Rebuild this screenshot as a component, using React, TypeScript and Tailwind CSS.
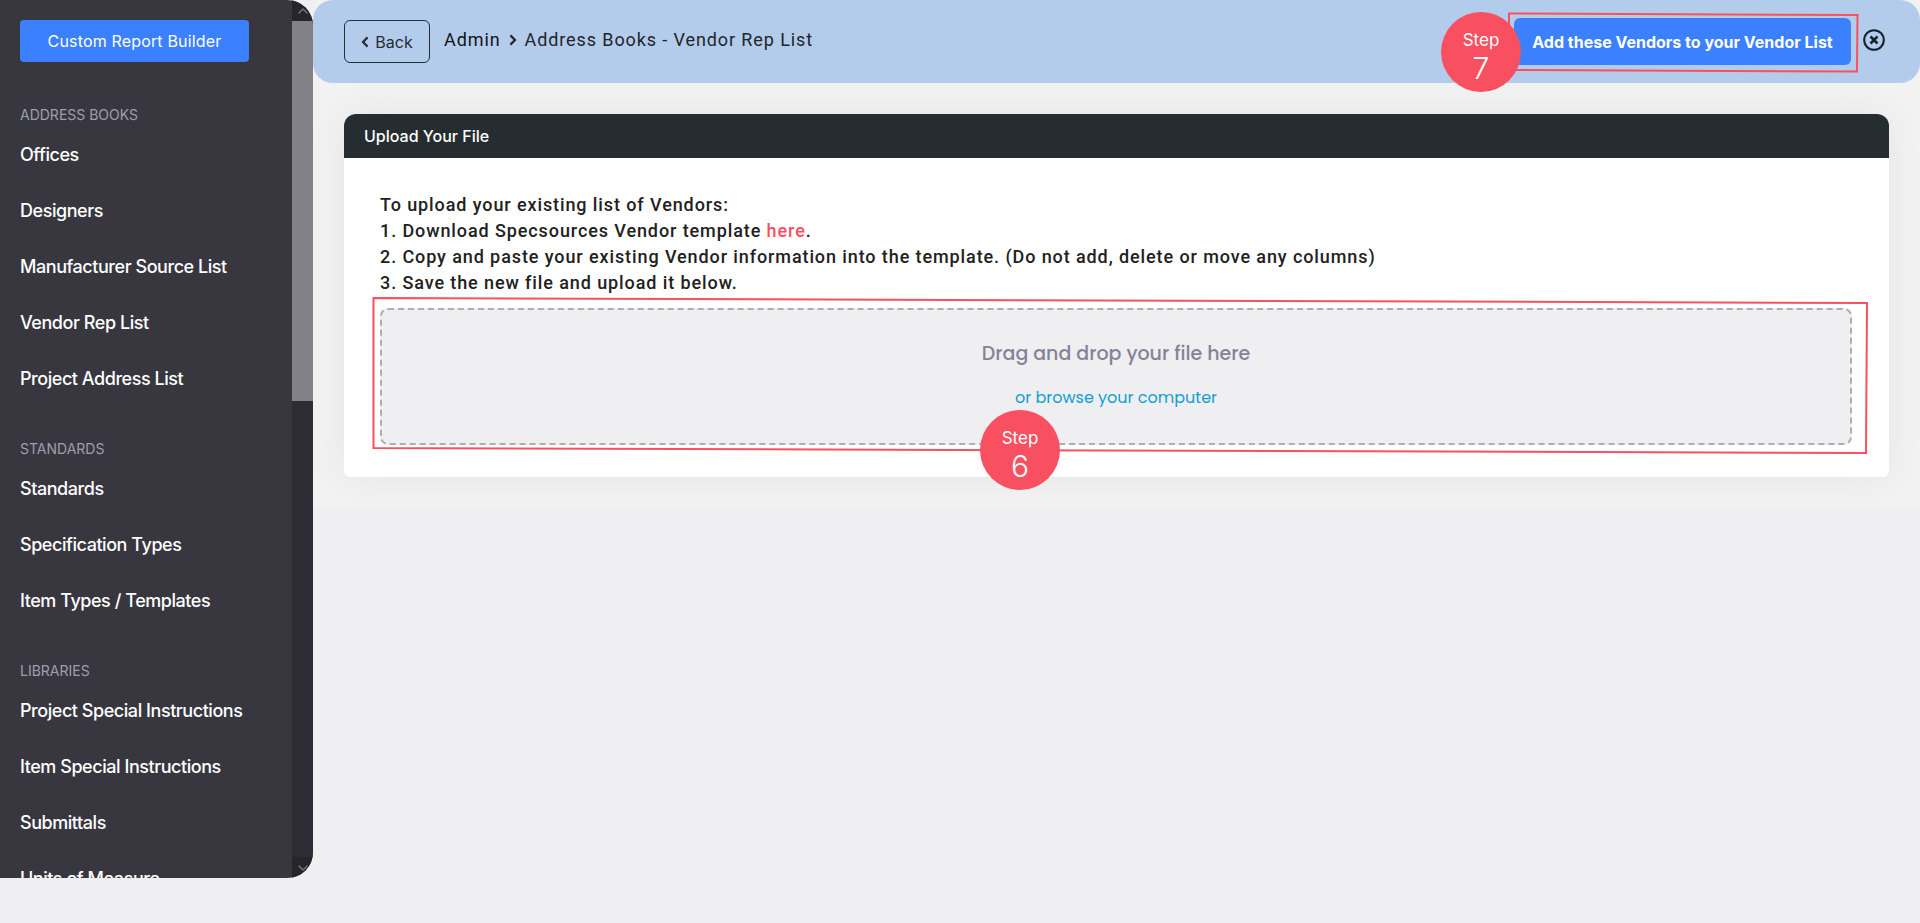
import React from "react";
import { ChevronDown, ChevronUp } from "lucide-react";

const groups = [
  {
    title: "ADDRESS BOOKS",
    items: ["Offices", "Designers", "Manufacturer Source List", "Vendor Rep List", "Project Address List"],
  },
  { title: "STANDARDS", items: ["Standards", "Specification Types", "Item Types / Templates"] },
  {
    title: "LIBRARIES",
    items: ["Project Special Instructions", "Item Special Instructions", "Submittals", "Units of Measure"],
  },
];

function SmallChevron({ direction }: { direction: "left" | "right" }) {
  return (
    <svg aria-hidden="true" viewBox="0 0 8 12" className="h-3 w-2 shrink-0" fill="none" stroke="currentColor" strokeWidth="2.2">
      <path d={direction === "left" ? "M6.6 1.4 2 6l4.600 4.600" : "M1.400 1.400 6 6l-4.600 4.600"} />
    </svg>
  );
}

function CloseIcon() {
  return (
    <svg aria-hidden="true" viewBox="0 0 24 24" className="h-6 w-6" fill="none" stroke="currentColor">
      <circle cx="12" cy="12" r="9.800" strokeWidth="2" />
      <path d="m8.500 8.500 7 7m0-7-7 7" strokeWidth="2.500" />
    </svg>
  );
}

function StepBadge({ step, className }: { step: number; className: string }) {
  return (
    <div
      className={`absolute flex h-20 w-20 flex-col items-center rounded-full bg-[#f85060] pt-4 text-white ${className}`}
    >
      <span className="text-[17px] leading-6">Step</span>
      <span className="text-[30px] leading-8 font-light">{step}</span>
    </div>
  );
}

function Sidebar() {
  return (
    <aside className="flex h-[calc(100vh-45px)] w-[313px] shrink-0 overflow-hidden rounded-r-[26px] bg-[#383740]">
      <div className="min-w-0 flex-1 overflow-hidden px-5 pt-5">
        <button className="h-[42px] w-[229px] rounded bg-[#3b80ff] text-base tracking-[0.01em] text-white">
          Custom Report Builder
        </button>
        <nav className="mt-[41px] flex flex-col gap-[30px]">
          {groups.map((group) => (
            <section key={group.title}>
              <h2 className="h-6 text-sm leading-6 text-[#9f9eab]">{group.title}</h2>
              <ul>
                {group.items.map((item) => (
                  <li key={item} className="flex h-14 items-center">
                    <a href="#" className="text-lg leading-6 font-medium tracking-tight whitespace-nowrap text-white">
                      {item}
                    </a>
                  </li>
                ))}
              </ul>
            </section>
          ))}
        </nav>
      </div>
      <div aria-hidden="true" className="flex w-[21px] flex-col items-center bg-[#2d2c35] text-[#77767b]">
        <div className="flex h-[21px] w-full items-center justify-center bg-[#262529]">
          <ChevronUp size={16} />
        </div>
        <div className="h-[380px] w-full bg-[#828186]" />
        <div className="flex-1" />
        <div className="flex h-[21px] w-full items-center justify-center bg-[#262529]">
          <ChevronDown size={16} />
        </div>
      </div>
    </aside>
  );
}

function TopBar() {
  return (
    <header className="relative flex h-[83px] items-start rounded-[20px] bg-[#b4ccec] pr-[34px] pl-[31px]">
      <button className="mt-5 flex h-[43px] w-[86px] items-center justify-center gap-1.5 rounded-md border border-[#252d30] text-base text-[#252d30]">
        <SmallChevron direction="left" />
        Back
      </button>
      <nav className="mt-7 ml-[14px] flex items-center gap-2 font-[Roboto,sans-serif] text-lg leading-6 tracking-wider text-[#202528]">
        <a href="#" className="text-[#101416]">
          Admin
        </a>
        <SmallChevron direction="right" />
        <span>Address Books - Vendor Rep List</span>
      </nav>
      <div className="relative mt-[18px] ml-auto">
        <button className="h-[47px] w-[337px] rounded-md bg-[#3b80ff] text-base font-bold whitespace-nowrap text-white">
          Add these Vendors to your Vendor List
        </button>
        <svg
          aria-hidden="true"
          viewBox="0 0 353 63"
          preserveAspectRatio="none"
          className="pointer-events-none absolute -top-2 -left-2 h-[63px] w-[353px]"
        >
          <path d="M3 3.500 351.500 5 351 61.500 3 60Z" fill="none" stroke="#f85060" strokeWidth="2" />
        </svg>
        <StepBadge step={7} className="-top-[6px] -left-[73px]" />
      </div>
      <button aria-label="Close" className="mt-7 ml-[11px] text-[#15202a]">
        <CloseIcon />
      </button>
    </header>
  );
}

function UploadCard() {
  return (
    <section className="rounded-t-xl rounded-b-md bg-white shadow-[0_0_40px_rgba(0,0,0,0.06)]">
      <h1 className="flex h-11 items-center rounded-t-xl bg-[#252d30] px-5 text-base font-medium text-white">
        Upload Your File
      </h1>
      <div className="pt-[34px] pr-[37px] pb-8 pl-9">
        <div className="font-[Roboto,sans-serif] text-lg leading-[26px] font-medium tracking-wider text-[#212121]">
          <p>To upload your existing list of Vendors:</p>
          <p>
            1. Download Specsources Vendor template{" "}
            <a href="#" className="text-[#f85060]">
              here
            </a>
            .
          </p>
          <p>2. Copy and paste your existing Vendor information into the template. (Do not add, delete or move any columns)</p>
          <p>3. Save the new file and upload it below.</p>
        </div>
        <div className="relative mt-3">
          <label className="flex h-[137px] cursor-pointer flex-col items-center rounded-lg border-2 border-dashed border-[#aeaeae] bg-[#efeff1] pt-8 font-[Poppins,Inter,sans-serif]">
            <span className="text-[19px] leading-6 font-medium text-[#858396]">Drag and drop your file here</span>
            <span className="mt-5 text-base leading-6 text-[#119fd3]">or browse your computer</span>
            <input type="file" className="sr-only" />
          </label>
          <svg
            aria-hidden="true"
            viewBox="0 0 1496 161"
            preserveAspectRatio="none"
            className="pointer-events-none absolute -top-3 -left-2 h-[161px] w-[calc(100%+24px)]"
          >
            <path d="M1.500 2 1495 7 1494 157 1.500 152Z" fill="none" stroke="#f85060" strokeWidth="2" />
          </svg>
          <StepBadge step={6} className="top-[102px] left-[calc(50%-136px)]" />
        </div>
      </div>
    </section>
  );
}

export default function App() {
  return (
    <div className="flex min-h-screen items-start bg-[#efeff1] font-[Inter,sans-serif]">
      <Sidebar />
      <main className="min-w-0 flex-1 overflow-hidden bg-[#f2f2f2]">
        <TopBar />
        <div className="p-[31px]">
          <UploadCard />
        </div>
      </main>
    </div>
  );
}
